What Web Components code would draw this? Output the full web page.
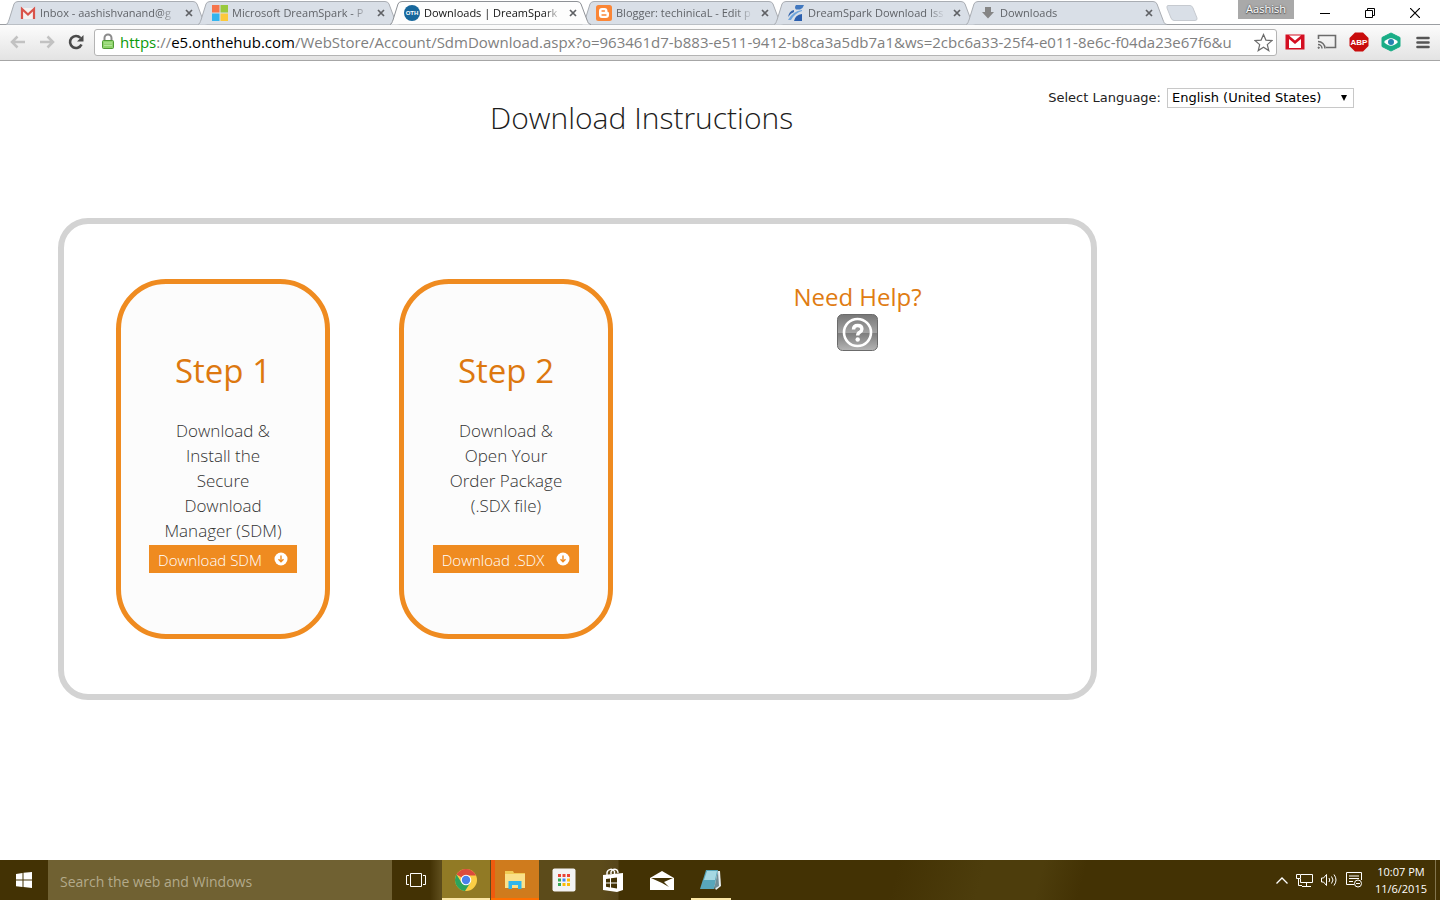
<!DOCTYPE html>
<html lang="en">
<head>
<meta charset="utf-8">
<title>Downloads | DreamSpark</title>
<style>
  html, body { margin: 0; background: #fff; }
  body { font-family: "Open Sans", "Noto Sans", sans-serif; }
</style>
</head>
<body>
<desktop-screen>
  <browser-tabs slot="top">
    <browser-tab>
      <svg slot="icon" width="16" height="16" viewBox="0 0 16 16"><path d="M1 3h14v11H1z" fill="#f3f1f0"/><path d="M2 14V4L8 9.500 14 4v10" fill="none" stroke="#d9534a" stroke-width="2.200"/></svg>
      Inbox - aashishvanand@g
    </browser-tab>
    <browser-tab>
      <svg slot="icon" width="16" height="16" viewBox="0 0 16 16"><path fill="#f6744a" d="M0 0h7.500v7.500H0z"/><path fill="#99c93c" d="M8.500 0H16v7.500H8.500z"/><path fill="#34b4ee" d="M0 8.500h7.500V16H0z"/><path fill="#fcc93a" d="M8.500 8.500H16V16H8.500z"/></svg>
      Microsoft DreamSpark - P
    </browser-tab>
    <browser-tab active>
      <svg slot="icon" width="16" height="16" viewBox="0 0 16 16"><circle cx="8" cy="8" r="8" fill="#17679c"/><text x="8" y="10" text-anchor="middle" font-family="Liberation Sans, sans-serif" font-weight="700" font-size="6" fill="#fff">OTH</text></svg>
      Downloads | DreamSpark
    </browser-tab>
    <browser-tab>
      <svg slot="icon" width="16" height="16" viewBox="0 0 16 16"><rect width="16" height="16" rx="2.500" fill="#fb8636"/><path d="M6 3h2.500a3 3 0 0 1 3 3c0 1 .3 1.200 1.200 1.300.3 0 .3.300.3.700v2a3 3 0 0 1-3 3H6a3 3 0 0 1-3-3V6a3 3 0 0 1 3-3z" fill="#fff"/><path d="M6 6h2.500M6 10h4" stroke="#fb8636" stroke-width="1.300" stroke-linecap="round"/></svg>
      Blogger: techinicaL - Edit p
    </browser-tab>
    <browser-tab>
      <svg slot="icon" width="16" height="16" viewBox="0 0 16 16"><path d="M8 0h8q-1 3.500-4 4.500H8q-2-2 0-4.500z" fill="#4178bf"/><path d="M14 5Q5 6 0 15h3q4-7 11-9z" fill="#6fa5dc"/><path d="M6 5Q1 6 0 12q3-4 6-5z" fill="#3566ad"/><path d="M14 9q-7 1-8 7h8z" fill="#2b5fae"/></svg>
      DreamSpark Download Iss
    </browser-tab>
    <browser-tab>
      <svg slot="icon" width="16" height="16" viewBox="0 0 16 16"><path d="M5 2h6v5h3l-6 6.500L2 7h3z" fill="#858585"/></svg>
      Downloads
    </browser-tab>
  </browser-tabs>
  <browser-toolbar slot="top"></browser-toolbar>
  <download-page>
    <step-card>
      <span slot="title">Step 1</span>
      Download &amp;<br>Install the<br>Secure<br>Download<br>Manager (SDM)
      <span slot="action">Download SDM</span>
    </step-card>
    <step-card>
      <span slot="title">Step 2</span>
      Download &amp;<br>Open Your<br>Order Package<br>(.SDX file)
      <span slot="action">Download .SDX</span>
    </step-card>
    <help-link>Need Help?</help-link>
  </download-page>
  <task-bar slot="bottom"></task-bar>
</desktop-screen>

<script>
function define(name, markup) {
  customElements.define(name, class extends HTMLElement {
    constructor() {
      super();
      this.attachShadow({ mode: "open" }).innerHTML = markup;
    }
  });
}

define("desktop-screen", `
<style>
  :host { display: flex; flex-direction: column; min-height: 100vh; box-sizing: border-box; padding-right: 2px; }
  main { flex: 1; }
</style>
<slot name="top"></slot>
<main><slot></slot></main>
<slot name="bottom"></slot>`);

define("browser-tab", `
<style>
  :host { display: flex; align-items: center; flex: 0 1 192px; min-width: 0; height: 24px; box-sizing: border-box; position: relative; isolation: isolate;
    padding: 2px 2px 0 13px; font-size: 11px; color: #606368; }
  :host([active]) { z-index: 1; color: #111; --fill: #fdfdfd; --edge: #8e9196; }
  .shape { position: absolute; left: -1px; top: 0; width: calc(100% + 9px); height: 25px; z-index: -1; }
  .shape path { fill: var(--fill, #d9dfe7); stroke: var(--edge, #a9adb3); vector-effect: non-scaling-stroke; }
  .title { flex: 1; min-width: 0; margin-left: 4px; overflow: hidden; white-space: nowrap; line-height: 18px;
    -webkit-mask-image: linear-gradient(to right, #000 88%, transparent); mask-image: linear-gradient(to right, #000 88%, transparent); }
  button { border: 0; background: none; padding: 0; margin-left: 4px; width: 16px; height: 16px; display: grid; place-items: center; }
  ::slotted(svg) { display: block; flex: none; }
</style>
<svg class="shape" viewBox="0 0 201 25" preserveAspectRatio="none"><path d="M0 24.500C2 24 2 22 3 20L8 4Q9 1.500 12 1.500H187Q190 1.500 191 4L197 20C198 22 198 24 201 24.500"/></svg>
<slot name="icon"></slot>
<span class="title"><slot></slot></span>
<button aria-label="Close tab"><svg width="8" height="8" viewBox="0 0 8 8"><path d="M1 1l6 6M7 1L1 7" stroke="#5f6165" stroke-width="1.700"/></svg></button>`);

define("browser-tabs", `
<style>
  :host { display: flex; height: 25px; box-sizing: border-box; padding-left: 7px; border-bottom: 1px solid #9b9ea2; background: #fff; }
  .tabs { display: flex; flex: 0 1 1152px; min-width: 0; height: 25px; }
  .new { border: 0; background: none; padding: 0; margin: 5px 0 0 6px; height: 16px; flex: none; }
  .new svg { display: block; }
  .user { margin-left: auto; flex: none; width: 56px; height: 19px; background: #a9a9a9; color: #fff; font-size: 11px; line-height: 18px; text-align: center;
    text-shadow: 0 0 2px #444, 0 1px 1px #555; }
  .window { display: flex; flex: none; margin: 0 3px 0 8px; height: 24px; }
  .window button { width: 45px; border: 0; background: none; padding: 2px 0 0; display: grid; place-items: center; }
</style>
<div class="tabs"><slot></slot></div>
<button class="new" aria-label="New tab"><svg width="34" height="16" viewBox="0 0 34 16"><path d="M3 .5H25Q27 .5 28 3L32 13Q32.500 15.500 30 15.500H9Q7 15.500 6 13L2 3Q1.500 .5 3 .5z" fill="#d9dfe7" stroke="#c6cad0"/></svg></button>
<div class="user">Aashish</div>
<div class="window">
  <button aria-label="Minimize"><svg width="10" height="10"><path d="M0 5.500h10" stroke="#000"/></svg></button>
  <button aria-label="Restore"><svg width="10" height="10" fill="none" stroke="#000"><path d="M.5 2.500h7v7h-7zM2.500 2V.5h7v7H8"/></svg></button>
  <button aria-label="Close"><svg width="10" height="10"><path d="M0 0l10 10M10 0L0 10" stroke="#000" stroke-width="1.200"/></svg></button>
</div>`);

define("browser-toolbar", `
<style>
  :host { display: flex; align-items: center; height: 36px; box-sizing: border-box; padding: 0 7px 1px 8px; background: linear-gradient(#fcfcfc, #e3e3e3); border-bottom: 1px solid #a6a6a6; }
  button { border: 0; background: none; padding: 0; flex: none; display: grid; place-items: center; height: 20px; width: 20px; }
  .nav { display: flex; gap: 9px; flex: none; margin-right: 8px; }
  .box { flex: 1; min-width: 0; height: 27px; box-sizing: border-box; border: 1px solid #b4b4b4; border-radius: 3px; background: #fff; display: flex; align-items: center; padding: 0 3px 0 6px; }
  .url { flex: 1; min-width: 0; overflow: hidden; white-space: nowrap; margin-left: 5px; font-size: 15px; line-height: 24px; color: #808080; }
  .s { color: #0b9a0b; } .h { color: #000; }
  .ext { display: flex; gap: 12px; flex: none; margin-left: 8px; }
</style>
<div class="nav">
  <button aria-label="Back"><svg width="16" height="14" viewBox="0 0 16 14" fill="none" stroke="#c2c2c2" stroke-width="2.500"><path d="M15 7H2M7.500 1.500L2 7l5.500 5.500"/></svg></button>
  <button aria-label="Forward"><svg width="16" height="14" viewBox="0 0 16 14" fill="none" stroke="#c2c2c2" stroke-width="2.500"><path d="M1 7h13M8.500 1.500L14 7l-5.500 5.500"/></svg></button>
  <button aria-label="Reload"><svg width="16" height="16" viewBox="0 0 16 16"><path d="M13.500 10.500A6 6 0 1 1 12.500 4" fill="none" stroke="#4b4b4b" stroke-width="2.600"/><path d="M15.500 1v6.500H9z" fill="#4b4b4b"/></svg></button>
</div>
<div class="box">
  <svg width="14" height="18" viewBox="0 0 14 18"><path d="M3.500 8V5a3.500 3.500 0 0 1 7 0v3" fill="none" stroke="#8b8b8b" stroke-width="2"/><rect x="1.500" y="7.500" width="11" height="8" rx="1" fill="#8ed36a" stroke="#4f9a34"/><path d="M3 10h8M3 12.500h8" stroke="#b4e69a"/></svg>
  <div class="url" role="textbox" aria-label="Address"><span class="s">https</span>://<span class="h">e5.onthehub.com</span>/WebStore/Account/SdmDownload.aspx?o=963461d7-b883-e511-9412-b8ca3a5db7a1&amp;ws=2cbc6a33-25f4-e011-8e6c-f04da23e67f6&amp;u</div>
  <button aria-label="Bookmark"><svg width="19" height="19" viewBox="0 0 19 19"><path d="M9.500 1.500l2.400 5.600 6 .5-4.600 4 1.500 6-5.300-3.300-5.300 3.300 1.500-6-4.600-4 6-.5z" fill="#fff" stroke="#6c6c6c" stroke-width="1.200"/></svg></button>
</div>
<div class="ext">
  <button aria-label="Gmail"><svg width="20" height="16" viewBox="0 0 20 16"><path d="M.5 .5h19v15H.5z" fill="#d40f22"/><path d="M4 1.500h12l-6 5z" fill="#fff"/><path d="M4 5l6 5 6-5v9H4z" fill="#fff"/></svg></button>
  <button aria-label="Cast"><svg width="20" height="16" viewBox="0 0 20 16" fill="none" stroke="#6b6b6b"><path d="M1.500 5V1.500h17v12H9" stroke-width="1.600"/><path d="M1 7.500a7 7 0 0 1 7 7M1 10.500a4 4 0 0 1 4 4" stroke-width="1.500"/><circle cx="1.700" cy="13.700" r=".7" fill="#6b6b6b"/></svg></button>
  <button aria-label="Adblock Plus"><svg width="20" height="20" viewBox="0 0 20 20"><path d="M6 .5h8L19.500 6v8L14 19.500H6L.5 14V6z" fill="#c90d0d"/><text x="10" y="13" text-anchor="middle" font-family="Liberation Sans, sans-serif" font-weight="700" font-size="8" fill="#fff">ABP</text></svg></button>
  <button aria-label="Privacy"><svg width="20" height="20" viewBox="0 0 20 20"><path d="M10 1l9 4.500v9L10 19l-9-4.500v-9z" fill="#19ad86" stroke="#19ad86" stroke-linejoin="round"/><path d="M3 10q7-7.500 14 0-7 7.500-14 0z" fill="#fff"/><circle cx="10" cy="10" r="3" fill="#2683b0"/></svg></button>
  <button aria-label="Menu"><svg width="14" height="13" viewBox="0 0 14 13"><path d="M1.500 2h11M1.500 6.500h11M1.500 11h11" stroke="#555" stroke-width="2.600" stroke-linecap="round"/></svg></button>
</div>`);

define("download-page", `
<style>
  :host { display: block; }
  header { display: grid; grid-template-columns: 1fr auto; align-items: start; padding: 27px 86px 0 235px; }
  h1 { margin: 5px 0 0; font-weight: 300; font-size: 30px; line-height: 50px; text-align: center; color: #1c1c1c; }
  .lang { display: flex; align-items: center; gap: 6px; font: 13px/20px "DejaVu Sans", sans-serif; color: #222; }
  select { appearance: none; width: 187px; height: 20px; border: 1px solid #c8c8c8; border-radius: 0; padding: 0 18px 0 4px; font: inherit; line-height: 18px; color: #000;
    background: #fff url("data:image/svg+xml,%3Csvg xmlns='http://www.w3.org/2000/svg' width='6' height='7'%3E%3Cpath d='M0 0h6L3 6z'/%3E%3C/svg%3E") no-repeat right 6px center; }
  section { display: grid; grid-template-columns: 214px 214px 1fr; gap: 69px; box-sizing: border-box; max-width: 1039px; margin: 75px 58px 0;
    border: 6px solid #d3d3d3; border-radius: 30px; padding: 55px 58px 55px 52px; }
</style>
<header>
  <h1>Download Instructions</h1>
  <div class="lang"><label for="lang">Select Language:</label><select id="lang"><option>English (United States)</option></select></div>
</header>
<section><slot></slot></section>`);

define("step-card", `
<style>
  :host { display: flex; flex-direction: column; align-items: center; box-sizing: border-box; min-height: 360px; border: 5px solid #ef8b20; border-radius: 50px; background: #fcfcfc; padding-top: 62px; text-align: center; }
  h2 { margin: 0; font-weight: 400; font-size: 33px; line-height: 50px; color: #dd780f; }
  p { margin: 22px 0 2px; min-height: 125px; font-weight: 300; font-size: 17px; line-height: 25px; color: #333; }
  button { display: flex; align-items: center; gap: 12px; border: 0; background: #ef8b20; color: #fff; height: 28px; padding: 2px 9px 0; font: 300 15px/26px "Open Sans", sans-serif; white-space: nowrap; }
  svg { margin-bottom: 2px; }
</style>
<h2><slot name="title"></slot></h2>
<p><slot></slot></p>
<button><slot name="action"></slot><svg width="14" height="14" viewBox="0 0 14 14"><circle cx="7" cy="7" r="6.500" fill="#fff"/><path d="M7 3.500v6M4.500 7.200L7 9.700l2.500-2.500" fill="none" stroke="#ef8b20" stroke-width="1.400"/></svg></button>`);

define("help-link", `
<style>
  :host { display: block; text-align: center; }
  a { display: inline-flex; flex-direction: column; align-items: center; color: #e07c12; text-decoration: none; font-size: 24px; line-height: 35px; }
</style>
<a href="#"><slot></slot>
<svg width="41" height="37" viewBox="0 0 41 37"><defs><linearGradient id="g" x2="0" y2="1"><stop offset="0" stop-color="#777"/><stop offset=".5" stop-color="#a2a2a2"/><stop offset=".52" stop-color="#7d7d7d"/><stop offset="1" stop-color="#b5b5b5"/></linearGradient></defs><rect x=".5" y=".5" width="40" height="36" rx="5" fill="url(#g)" stroke="#6b6b6b"/><circle cx="20.500" cy="18.500" r="13.500" fill="none" stroke="#fff" stroke-width="2.600"/><path d="M16.500 15.500q0-4 4.200-4t4.200 3.500q0 2-2.200 3.200-2 1-2 3.300" fill="none" stroke="#fff" stroke-width="3.400"/><circle cx="20.700" cy="25.500" r="2.200" fill="#fff"/></svg></a>`);

define("task-bar", `
<style>
  :host { display: flex; align-items: stretch; height: 40px; color: #fff;
    background: linear-gradient(105deg, transparent 62%, #4d3d0c 68%, #4d3d0c 72%, transparent 75%), linear-gradient(to right, #433204 0 430px, #5c4b1a 440px 600px, #56451a 618px, #433204 619px); }
  button { border: 0; background: none; padding: 0; width: 48px; flex: none; display: grid; place-items: center; box-sizing: border-box; }
  input { flex: 0 1 344px; min-width: 0; box-sizing: border-box; border: 0; background: #706132; padding: 2px 12px 0; font: 14px "Open Sans", sans-serif; color: #fff; }
  input::placeholder { color: #b3aa8b; opacity: 1; }
  .apps { display: flex; gap: 1px; margin-left: 2px; }
  .chrome { background: #917a25; border-bottom: 2px solid #fbe7a6; padding-top: 2px; }
  .files { background: linear-gradient(to right, #ef5a0e 4px, #cf7b1d 4px); border-bottom: 2px solid #ff6f00; padding-top: 2px; }
  .note { background: linear-gradient(#fbe7a6, #fbe7a6) no-repeat center bottom / 40px 2px; }
  .tray { display: flex; align-items: center; gap: 8px; margin-left: auto; }
  time { font-size: 11px; line-height: 17px; text-align: center; margin-left: 4px; }
  .desk { width: 4px; border-left: 1px solid #82754f; align-self: stretch; }
</style>
<button aria-label="Start"><svg width="16" height="16" viewBox="0 0 16 16" fill="#fff"><path d="M0 2l6.500-1v6.500H0zM7.500.8L16 0v7.500H7.500zM0 8.500h6.500V15L0 14.200zM7.500 8.500H16V16l-8.500-1z"/></svg></button>
<input type="text" placeholder="Search the web and Windows" aria-label="Search">
<button aria-label="Task view"><svg width="20" height="14" viewBox="0 0 20 14" fill="none" stroke="#fff"><path d="M4.500.5h11v13h-11zM3 2.500H.5v9H3M17 2.500h2.500v9H17"/></svg></button>
<div class="apps">
  <button class="chrome" aria-label="Chrome"><svg width="22" height="22" viewBox="0 0 22 22"><circle cx="11" cy="11" r="11" fill="#fbce45"/><path d="M11 11L1.500 5.500A11 11 0 0 1 20.500 5.500L20.800 6.500H11z" fill="#dc4b3e"/><path d="M1.500 5.500A11 11 0 0 0 10 22L15.500 13.500 11 11 6.500 13.500z" fill="#2da35c"/><circle cx="11" cy="11" r="5.300" fill="#fff"/><circle cx="11" cy="11" r="4.200" fill="#4a80ec"/></svg></button>
  <button class="files" aria-label="File Explorer"><svg width="22" height="20" viewBox="0 0 22 20"><path d="M1 1h8l1 2h11v15H1z" fill="#f1cb55"/><path d="M1 4h20v14H1z" fill="#fae08a"/><path d="M4.500 19v-8h13v8h-3.500v-4h-6v4z" fill="#30b5ed"/></svg></button>
  <button aria-label="All apps"><svg width="24" height="24" viewBox="0 0 24 24"><rect x=".5" y=".5" width="23" height="23" rx="2" fill="#f3f3f3"/><path fill="#e94335" d="M6 6h3v3H6zM10.500 6h3v3h-3zM15 6h3v3h-3z"/><path fill="#35a852" d="M6 10.500h3v3H6zM6 15h3v3H6z"/><path fill="#4285f4" d="M10.500 10.500h3v3h-3z"/><path fill="#fbbc05" d="M15 10.500h3v3h-3zM15 15h3v3h-3zM10.500 15h3v3h-3z"/></svg></button>
  <button aria-label="Store"><svg width="22" height="24" viewBox="0 0 22 24"><path d="M5 7V4.500A4 4 0 0 1 12.500 3.500V6M9 6V4Q10 1 13 1.200 16 1.500 16 5" fill="none" stroke="#fff" stroke-width="1.400"/><path d="M1 7l20-2v17l-6 2-14-2z" fill="#fff"/><path d="M4 11l4-.6v4H4zM9 10.200l6-.8v5H9zM4 15.400h4v4l-4-.6zM9 15.400h6v5l-6-.8z" fill="#433204"/></svg></button>
  <button aria-label="Mail"><svg width="24" height="19" viewBox="0 0 24 19"><path d="M0 7l12-7 12 7v12H0z" fill="#fff"/><path d="M1 7h22l-9 4 5 5-7-4z" fill="#433204"/></svg></button>
  <button class="note" aria-label="Notepad"><svg width="22" height="22" viewBox="0 0 22 22"><path d="M7 2h13l1 15-5 4z" fill="#e6edf0"/><path d="M6 1h12l-4 19H0z" fill="#58a6bb"/><path d="M7 2h10l-2 9H4z" fill="#a5d8e3"/><path d="M18 2l-4 18 5-3z" fill="#708d96"/></svg></button>
</div>
<div class="tray">
  <svg width="12" height="7" viewBox="0 0 12 7"><path d="M.5 6.500L6 1l5.500 5.500" fill="none" stroke="#fff" stroke-width="1.300"/></svg>
  <svg width="17" height="14" viewBox="0 0 17 14" fill="none" stroke="#fff"><path d="M5 1.500h11.500v8H4.500V6M10.500 9.500v4M6 13.500h9M.5 1.500h4v4h-4zM2.500 6v6.500H6"/></svg>
  <svg width="17" height="14" viewBox="0 0 17 14" fill="none" stroke="#fff"><path d="M.5 5h2l3-3.500v11L2.500 9h-2zM8 5q1.500 2 0 4M10.500 3.500q3 3.500 0 7M13 1.500q4 5.500 0 11"/></svg>
  <svg width="17" height="16" viewBox="0 0 17 16" fill="none" stroke="#fff"><path d="M8 12.500H.5V.5h15V8M3 4h10M3 6.500h10M3 9.500h4"/><circle cx="12" cy="11.500" r="3.500"/><path d="M10 11.500h4"/></svg>
  <time>10:07 PM<br>11/6/2015</time>
  <div class="desk"></div>
</div>`);
</script>
</body>
</html>
